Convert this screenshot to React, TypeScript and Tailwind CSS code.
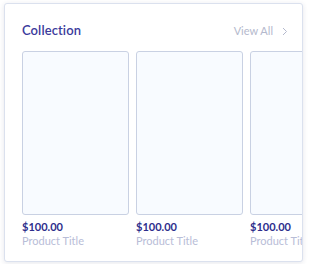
import React from "react"

const products = [1, 2, 3]

function App() {
  return (
    <div className="w-[314px] h-[264px] bg-white pt-[3px] pl-[4px]" style={{ fontFamily: "Lato, 'Noto Sans', sans-serif" }}>
      <div className="w-[299px] h-[259px] border border-[#dbe1ee] rounded-[3px] bg-white shadow-[0_1px_5px_rgba(40,50,90,0.12)] overflow-hidden pl-[17px] pt-[17px]">
        <div className="flex items-center justify-between pr-[14px] h-[20px]">
          <h1 className="text-[13px] font-semibold text-[#3b3b9c] tracking-[0.1px]">Collection</h1>
          <div className="flex items-center gap-[9px] text-[11px] text-[#b4b9cd]">
            <span>View All</span>
            <svg width="6" height="9" viewBox="0 0 6 9" fill="none">
              <path d="M1 1l3.5 3.5L1 8" stroke="#b4b9cd" strokeWidth="1" />
            </svg>
          </div>
        </div>
        <div className="flex gap-[7px] mt-[10px]">
          {products.map((p) => (
            <div key={p} className="w-[107px] shrink-0">
              <div className="h-[164px] border border-[#c9d1e3] rounded-[3px] bg-[#f8fbff]"></div>
              <div className="mt-[5px] text-[11px] font-bold text-[#2e2e8c] leading-[14px]">$100.00</div>
              <div className="text-[11px] text-[#b8bdd7] leading-[14px] whitespace-nowrap">Product Title</div>
            </div>
          ))}
        </div>
      </div>
    </div>
  )
}

export default App
